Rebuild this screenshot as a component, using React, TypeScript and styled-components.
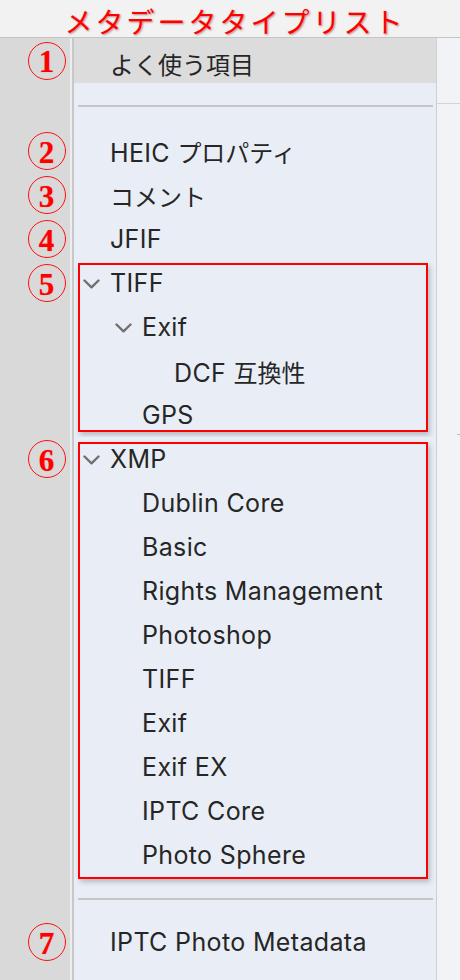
import styled, { createGlobalStyle } from 'styled-components'

type Entry = {
    label: string
    level: number
    open?: boolean
    mark?: number
}

const basics: Entry[] = [
    { label: 'HEIC プロパティ', level: 0, mark: 2 },
    { label: 'コメント', level: 0, mark: 3 },
    { label: 'JFIF', level: 0, mark: 4 },
]

const tiff: Entry[] = [
    { label: 'TIFF', level: 0, open: true, mark: 5 },
    { label: 'Exif', level: 1, open: true },
    { label: 'DCF 互換性', level: 2 },
    { label: 'GPS', level: 1 },
]

const xmp: Entry[] = [
    { label: 'XMP', level: 0, open: true, mark: 6 },
    { label: 'Dublin Core', level: 1 },
    { label: 'Basic', level: 1 },
    { label: 'Rights Management', level: 1 },
    { label: 'Photoshop', level: 1 },
    { label: 'TIFF', level: 1 },
    { label: 'Exif', level: 1 },
    { label: 'Exif EX', level: 1 },
    { label: 'IPTC Core', level: 1 },
    { label: 'Photo Sphere', level: 1 },
]

// japanese runs get their own span, the latin font runs a bit larger
const Text = ({ children }: { children: string }) => (
    <Label>
        {children.split(/([\u3000-\u9fff]+)/).map((part, i) =>
            /[\u3000-\u9fff]/.test(part) ? <Jp key={i}>{part}</Jp> : part,
        )}
    </Label>
)

const Chevron = () => (
    <svg width="17" height="10" viewBox="0 0 17 10">
        <path d="M1.5 1.5 L8.5 8.3 L15.5 1.5" fill="none" stroke="#707070" strokeWidth="2.4" strokeLinecap="round" strokeLinejoin="round" />
    </svg>
)

const Marker = ({ n }: { n?: number }) => (n ? <Circle>{n}</Circle> : null)

const TreeLine = ({ entry }: { entry: Entry }) => (
    <Line>
        <Gutter>
            <Marker n={entry.mark} />
        </Gutter>
        <Panel>
            <TreeRow $level={entry.level}>
                <Twisty>{entry.open && <Chevron />}</Twisty>
                <Text>{entry.label}</Text>
            </TreeRow>
        </Panel>
    </Line>
)

const Divider = ({ before, after }: { before: number; after: number }) => (
    <Line>
        <Gutter />
        <Panel>
            <RuleWrap $before={before} $after={after}>
                <Rule />
            </RuleWrap>
        </Panel>
    </Line>
)

const App = () => {
    return (
        <>
            <GlobalStyle />
            <Page>
                <TitleBar>
                    <Title>メタデータタイプリスト</Title>
                </TitleBar>
                <Body>
                    <Main>
                        <Line>
                            <Gutter>
                                <Marker n={1} />
                            </Gutter>
                            <Panel $selected>
                                <FavRow>
                                    <Text>よく使う項目</Text>
                                </FavRow>
                            </Panel>
                        </Line>
                        <Divider before={22} after={22} />
                        {basics.map((e) => (
                            <TreeLine key={e.label} entry={e} />
                        ))}
                        <Group $top={2} $bottom={5}>
                            {tiff.map((e, i) => (
                                <TreeLine key={i} entry={e} />
                            ))}
                        </Group>
                        <Group $top={5} $bottom={-2}>
                            {xmp.map((e, i) => (
                                <TreeLine key={i} entry={e} />
                            ))}
                        </Group>
                        <Divider before={21} after={20} />
                        <TreeLine entry={{ label: 'IPTC Photo Metadata', level: 0, mark: 7 }} />
                        <Filler>
                            <Gutter />
                            <Panel />
                        </Filler>
                    </Main>
                    <SideStrip>
                        <SideHead />
                        <SideTick />
                    </SideStrip>
                </Body>
            </Page>
        </>
    )
}

const GlobalStyle = createGlobalStyle`
    html, body {
        margin: 0;
        padding: 0;
    }
    body {
        background: #e9eef6;
        font-family: Inter, "Noto Sans CJK JP", sans-serif;
    }
`

const Page = styled.div`
    width: 460px;
    height: 980px;
    overflow: hidden;
    display: flex;
    flex-direction: column;
`

const TitleBar = styled.div`
    height: 37px;
    flex: none;
    background: #f2f2f2;
    border-bottom: 1px solid #c4c4c4;
    display: flex;
    justify-content: center;
    align-items: flex-start;
`

const Title = styled.h1`
    margin: 0;
    padding-top: 3px;
    padding-left: 10px;
    font-family: 'Noto Sans CJK JP', sans-serif;
    font-weight: 400;
    font-size: 28px;
    line-height: 36px;
    letter-spacing: 3px;
    color: #ff0000;
    text-shadow: 1px 1px 2px rgba(110, 0, 0, 0.45);
`

const Body = styled.div`
    flex: 1;
    display: flex;
    min-height: 0;
`

const Main = styled.div`
    flex: 1;
    display: flex;
    flex-direction: column;
`

const Line = styled.div`
    display: flex;
    align-items: stretch;
`

const Filler = styled(Line)`
    flex: 1;
`

const Gutter = styled.div`
    width: 74px;
    flex: none;
    box-sizing: border-box;
    background: #d9d9d9;
    border-right: 2px solid #c8c8c8;
    box-shadow: inset -2px 0 0 #ededed;
    display: flex;
    align-items: center;
    justify-content: center;
    padding-left: 21px;
`

const Circle = styled.div`
    width: 38px;
    height: 38px;
    flex: none;
    box-sizing: border-box;
    border: 1.5px solid #ff1010;
    border-radius: 50%;
    display: flex;
    align-items: center;
    justify-content: center;
    font-family: 'Liberation Serif', serif;
    font-weight: 700;
    font-size: 31px;
    line-height: 1;
    padding-top: 2px;
    color: #ff0000;
    text-shadow: 0 0 1px rgba(255, 0, 0, 0.5);
`

const Panel = styled.div<{ $selected?: boolean }>`
    flex: 1;
    background: ${(p) => (p.$selected ? '#dcdcdc' : '#e9eef6')};
`

const FavRow = styled.div`
    height: 45px;
    box-sizing: border-box;
    padding: 5px 0 0 36px;
    display: flex;
    align-items: center;
`

const TreeRow = styled.div<{ $level: number }>`
    height: 44px;
    display: flex;
    align-items: center;
    padding-left: ${(p) => 9 + p.$level * 32}px;
`

const Twisty = styled.span`
    width: 27px;
    flex: none;
    display: flex;
    align-items: center;
    padding-top: 1px;
`

const Label = styled.span`
    font-size: 25px;
    letter-spacing: 0.35px;
    color: #262626;
    white-space: nowrap;
`

const Jp = styled.span`
    font-family: 'Noto Sans CJK JP', sans-serif;
    font-size: 24px;
    letter-spacing: 0;
`

const RuleWrap = styled.div<{ $before: number; $after: number }>`
    padding: ${(p) => p.$before}px 3px ${(p) => p.$after}px 4px;
`

const Rule = styled.div`
    height: 2px;
    background: #c6c6c6;
`

const Group = styled.div<{ $top: number; $bottom: number }>`
    position: relative;

    &::after {
        content: '';
        position: absolute;
        left: 78px;
        right: 8px;
        top: ${(p) => p.$top}px;
        bottom: ${(p) => p.$bottom}px;
        border: 2.5px solid #ff0000;
        box-shadow: 2px 3px 5px rgba(0, 0, 0, 0.22);
        pointer-events: none;
    }
`

const SideStrip = styled.div`
    width: 24px;
    flex: none;
    box-sizing: border-box;
    background: #f1f3f7;
    border-left: 1px solid #cdd0d5;
    display: flex;
    flex-direction: column;
`

const SideHead = styled.div`
    height: 65px;
    border-bottom: 1px solid #d3d5d9;
`

const SideTick = styled.div`
    margin: 330px 0 0 20px;
    width: 4px;
    height: 1px;
    background: #b9bcc0;
`

export default App
